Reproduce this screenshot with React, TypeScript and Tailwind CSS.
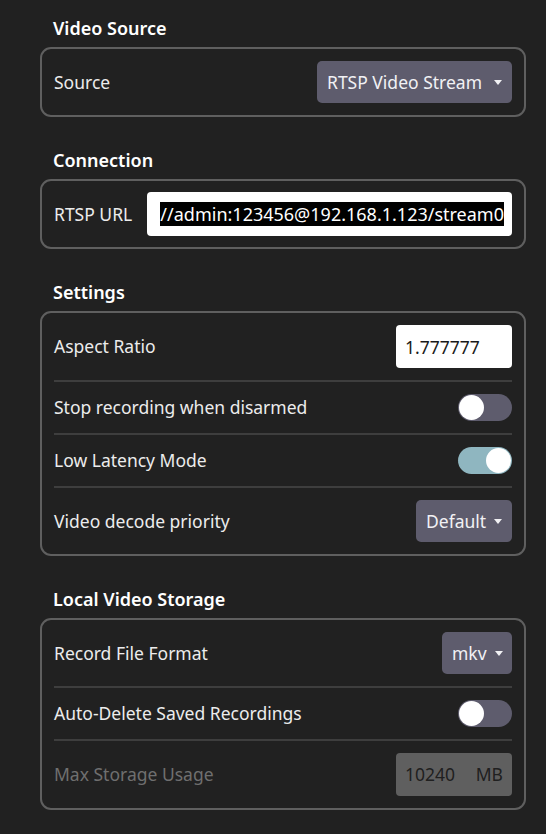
import React, { useState } from "react";

const font = { fontFamily: '"Noto Sans", "Open Sans", sans-serif' };

function Caret() {
  return (
    <svg className="ml-2 h-[5px] w-[8px] shrink-0" viewBox="0 0 8 5" fill="currentColor">
      <path d="M0 0h8L4 5z" />
    </svg>
  );
}

function Select({ value, width }: { value: string; width: string }) {
  return (
    <button
      type="button"
      className={`flex h-[42px] items-center justify-between rounded-[5px] bg-[#5e5c6d] pl-[10px] pr-[10px] text-[17.5px] text-[#f1f1f4] ${width}`}
    >
      <span>{value}</span>
      <Caret />
    </button>
  );
}

function Toggle({ on, onChange }: { on: boolean; onChange: () => void }) {
  return (
    <button
      type="button"
      onClick={onChange}
      className={`flex h-[27px] w-[54px] items-center rounded-full px-[1px] ${
        on ? "justify-end bg-[#8fb6c0]" : "justify-start bg-[#5e5c6d]"
      }`}
    >
      <span className="h-[25px] w-[25px] rounded-full bg-white" />
    </button>
  );
}

function Row({
  label,
  children,
  disabled,
  last,
}: {
  label: string;
  children: React.ReactNode;
  disabled?: boolean;
  last?: boolean;
}) {
  return (
    <div
      className={`flex items-center justify-between py-3 ${
        last ? "" : "border-b-2 border-[#3e3e3e]"
      }`}
    >
      <span className={disabled ? "text-[#6f6f6f]" : "text-[#ececec]"}>{label}</span>
      {children}
    </div>
  );
}

function Section({ title, children }: { title: string; children: React.ReactNode }) {
  return (
    <section>
      <h2 className="mb-[6px] pl-[13px] text-[18px] font-semibold leading-[26px] text-white">
        {title}
      </h2>
      <div className="rounded-[11px] border-2 border-[#5f5f5f] px-3">{children}</div>
    </section>
  );
}

export default function App() {
  const [stopDisarmed, setStopDisarmed] = useState(false);
  const [lowLatency, setLowLatency] = useState(true);
  const [autoDelete, setAutoDelete] = useState(false);

  return (
    <div
      className="min-h-[834px] bg-[#212121] pl-[40px] pr-[20px] pt-[15px] text-[17.5px]"
      style={font}
    >
      <div className="flex flex-col gap-[30px]">
        <Section title="Video Source">
          <Row label="Source" last>
            <Select value="RTSP Video Stream" width="w-[195px]" />
          </Row>
        </Section>

        <Section title="Connection">
          <div className="flex items-center py-[11px]">
            <span className="w-[93px] shrink-0 text-[#ececec]">RTSP URL</span>
            {/* input scrolled to the end, whole value selected */}
            <div className="flex h-[44px] min-w-0 flex-1 items-center justify-end overflow-hidden rounded-[4px] bg-white px-2 whitespace-nowrap">
              <span className="bg-black text-[18px] leading-[24px] text-white">
                //admin:123456@192.168.1.123/stream0
              </span>
            </div>
          </div>
        </Section>

        <Section title="Settings">
          <Row label="Aspect Ratio">
            <input
              defaultValue="1.777777"
              className="h-[43px] w-[116px] rounded-[4px] bg-white px-[9px] text-[17.5px] text-[#1a1a1a] outline-none"
            />
          </Row>
          <Row label="Stop recording when disarmed">
            <Toggle on={stopDisarmed} onChange={() => setStopDisarmed((v) => !v)} />
          </Row>
          <Row label="Low Latency Mode">
            <Toggle on={lowLatency} onChange={() => setLowLatency((v) => !v)} />
          </Row>
          <Row label="Video decode priority" last>
            <Select value="Default" width="w-[96px]" />
          </Row>
        </Section>

        <Section title="Local Video Storage">
          <Row label="Record File Format">
            <Select value="mkv" width="w-[70px]" />
          </Row>
          <Row label="Auto-Delete Saved Recordings">
            <Toggle on={autoDelete} onChange={() => setAutoDelete((v) => !v)} />
          </Row>
          <Row label="Max Storage Usage" disabled last>
            <div className="flex h-[43px] w-[116px] items-center justify-between rounded-[4px] bg-[#5f5f5f] px-[9px] text-[#202020]">
              <span>10240</span>
              <span>MB</span>
            </div>
          </Row>
        </Section>
      </div>
    </div>
  );
}
